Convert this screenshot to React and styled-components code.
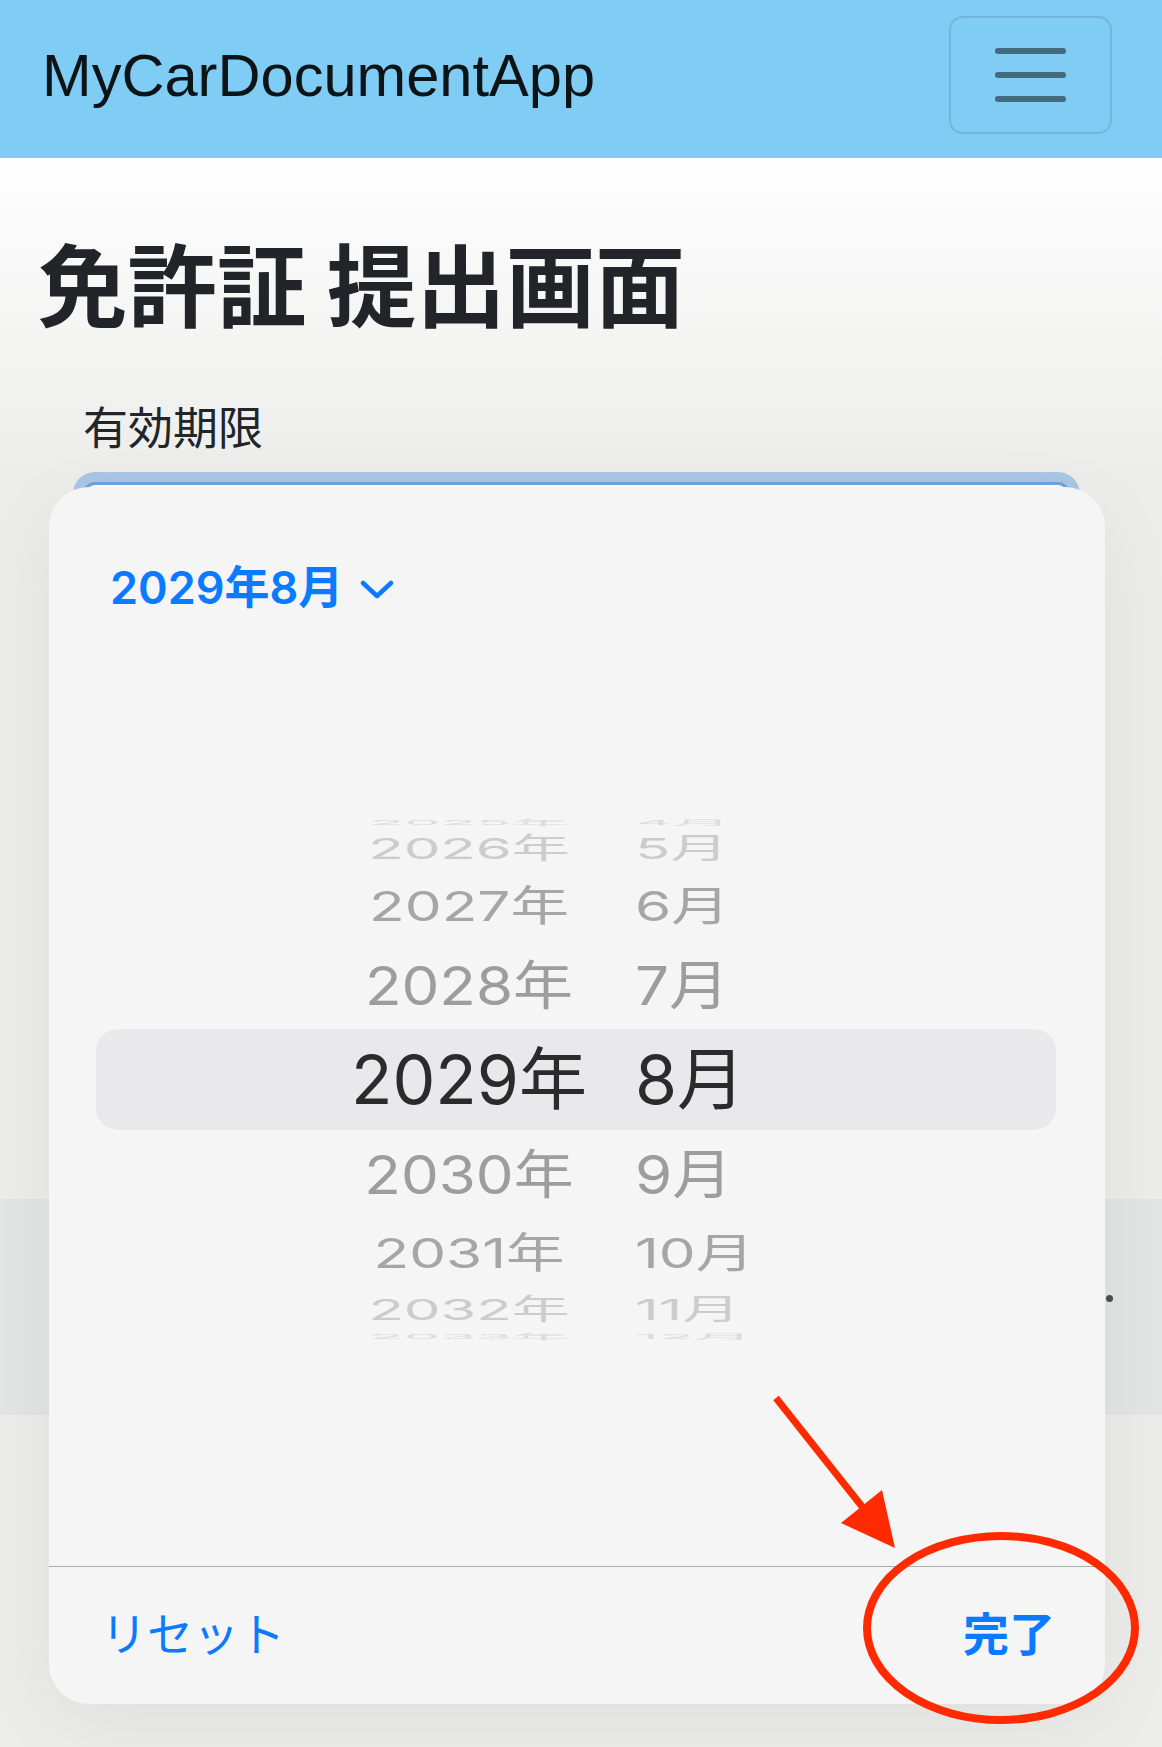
import React from "react"
import styled, { createGlobalStyle } from "styled-components"

const GlobalStyle = createGlobalStyle`
  html, body {
    margin: 0;
    padding: 0;
    background: #ececea;
  }
  body {
    font-family: "Noto Sans CJK JP", "Noto Sans", sans-serif;
    color: #212529;
  }
  * { box-sizing: border-box; }
`

const wheelRows = [
  { year: 2025, month: 4, k: 4, height: 10, squash: 0.11, size: 58, color: "#dcdcdc" },
  { year: 2026, month: 5, k: 3, height: 42.9, squash: 0.5, size: 58, color: "#cccccc" },
  { year: 2027, month: 6, k: 2, height: 71.2, squash: 0.71, size: 58.5, color: "#a6a6a6" },
  { year: 2028, month: 7, k: 1, height: 87.4, squash: 0.89, size: 60, color: "#9d9d9d" },
  { year: 2029, month: 8, k: 0, height: 101, squash: 1, size: 68, color: "#2b2b2b" },
  { year: 2030, month: 9, k: 1, height: 87.4, squash: 0.89, size: 60, color: "#9d9d9d" },
  { year: 2031, month: 10, k: 2, height: 71.2, squash: 0.71, size: 58.5, color: "#a6a6a6" },
  { year: 2032, month: 11, k: 3, height: 42.9, squash: 0.5, size: 58, color: "#cccccc" },
  { year: 2033, month: 12, k: 4, height: 10, squash: 0.11, size: 58, color: "#dcdcdc" },
]

const App = () => {
  return (
    <>
      <GlobalStyle />
      <Page>
        <Navbar>
          <Brand>MyCarDocumentApp</Brand>
          <Toggler aria-label="menu">
            <TogglerLine />
            <TogglerLine />
            <TogglerLine />
          </Toggler>
        </Navbar>

        <Main>
          <Title>免許証 提出画面</Title>
          <FormGroup>
            <FieldLabel>有効期限</FieldLabel>
            <DateInput />
          </FormGroup>
        </Main>

        <Band>
          <BandDot />
        </Band>

        <Picker>
          <PickerHeader>
            2029年8月
            <svg width="34" height="20" viewBox="0 0 34 20">
              <polyline
                points="3,3 17,16 31,3"
                fill="none"
                stroke="#0a7aff"
                strokeWidth="4.5"
                strokeLinecap="round"
                strokeLinejoin="round"
              />
            </svg>
          </PickerHeader>

          <Wheel>
            {wheelRows.map((r) => (
              <WheelRow key={r.year} $height={r.height} $selected={r.k === 0}>
                <YearCell $size={r.size} $color={r.color} $squash={r.squash}>
                  {r.year}年
                </YearCell>
                <MonthCell $size={r.size} $color={r.color} $squash={r.squash}>
                  {r.month}月
                </MonthCell>
              </WheelRow>
            ))}
          </Wheel>

          <PickerSpacer />

          <PickerFooter>
            <FooterButton>リセット</FooterButton>
            <FooterButton $bold>完了</FooterButton>
          </PickerFooter>
        </Picker>

        <Annotation width="1162" height="1747" viewBox="0 0 1162 1747">
          <ellipse
            cx="1001"
            cy="1628"
            rx="134"
            ry="92"
            fill="none"
            stroke="#ff2a00"
            strokeWidth="8"
          />
          <line
            x1="776"
            y1="1398"
            x2="864"
            y2="1509"
            stroke="#ff2a00"
            strokeWidth="7"
          />
          <polygon points="895,1548 841,1523 882,1490" fill="#ff2a00" />
        </Annotation>
      </Page>
    </>
  )
}

const Page = styled.div`
  position: relative;
  width: 1162px;
  min-height: 1747px;
  overflow: hidden;
  background:
    linear-gradient(180deg, #fefefe 158px, #ececeb 480px) top / 100% 480px no-repeat,
    #ececea;
`

const Navbar = styled.nav`
  height: 158px;
  background: #7fccf4;
  display: flex;
  align-items: center;
  justify-content: space-between;
  padding: 0 50px 8px 42px;
`

const Brand = styled.span`
  font-family: "Liberation Sans", Arial, sans-serif;
  font-size: 59.6px;
  color: rgba(0, 0, 0, 0.9);
`

const Toggler = styled.button`
  width: 163px;
  height: 118px;
  border: 2px solid rgba(0, 0, 0, 0.1);
  border-radius: 14px;
  background: transparent;
  display: flex;
  flex-direction: column;
  align-items: center;
  justify-content: center;
  gap: 18px;
  padding: 0;
`

const TogglerLine = styled.span`
  display: block;
  width: 71px;
  height: 6px;
  border-radius: 3px;
  background: #436b80;
`

const Main = styled.main`
  padding: 0 38px;
`

const Title = styled.h1`
  margin: 71px 0 0;
  font-size: 89.5px;
  font-weight: 700;
  line-height: 1.18;
  color: #212529;
`

const FormGroup = styled.div`
  margin-top: 57px;
  padding: 0 54px 0 45px;
`

const FieldLabel = styled.label`
  display: block;
  font-size: 45px;
  line-height: 1.5;
  margin-bottom: 23px;
  color: #212529;
`

const DateInput = styled.div`
  height: 115px;
  background: #fff;
  border: 3px solid #6ea4de;
  border-radius: 12px;
  box-shadow: 0 0 0 10px #a9c6e4;
`

const Band = styled.div`
  margin-top: 602px;
  height: 216px;
  background: #e3e5e4;
  display: flex;
  justify-content: flex-end;
  align-items: flex-start;
  padding: 96px 49px 0 0;
`

const BandDot = styled.span`
  width: 7px;
  height: 7px;
  border-radius: 50%;
  background: #4a5057;
`

const Picker = styled.div`
  position: absolute;
  top: 487px;
  left: 49px;
  width: 1056px;
  height: 1217px;
  background: #f5f5f5;
  border-radius: 40px;
  box-shadow: 0 20px 80px rgba(0, 0, 0, 0.06);
  display: flex;
  flex-direction: column;
  overflow: hidden;
`

const PickerHeader = styled.div`
  display: flex;
  align-items: center;
  gap: 17px;
  padding: 74px 0 0 61px;
  height: 128px;
  font-family: Inter, "Noto Sans CJK JP", sans-serif;
  font-size: 45px;
  font-weight: 600;
  line-height: 54px;
  color: #0a7aff;

  svg {
    margin-top: 4px;
  }
`

const Wheel = styled.div`
  margin-top: 202.5px;
  height: 524px;
  display: flex;
  flex-direction: column;
`

const WheelRow = styled.div`
  flex: none;
  height: ${(p) => p.$height}px;
  margin: 0 49px 0 47px;
  padding-left: 243px;
  display: flex;
  align-items: center;
  border-radius: 22px;
  background: ${(p) => (p.$selected ? "#e9e9eb" : "transparent")};
`

const WheelText = styled.span`
  display: block;
  font-family: Inter, "Noto Sans CJK JP", sans-serif;
  font-size: ${(p) => p.$size}px;
  line-height: 1.2;
  color: ${(p) => p.$color};
  white-space: nowrap;
  transform: scaleY(${(p) => p.$squash});
`

const YearCell = styled(WheelText)`
  width: 260px;
  text-align: center;
`

const MonthCell = styled(WheelText)`
  margin-left: 36px;
  text-align: left;
`

const PickerSpacer = styled.div`
  flex: 1;
`

const PickerFooter = styled.div`
  flex: none;
  height: 138px;
  border-top: 1px solid #acacac;
  display: flex;
  align-items: center;
  justify-content: space-between;
  padding: 0 50px 8px 52px;
`

const FooterButton = styled.button`
  border: 0;
  background: transparent;
  padding: 0;
  font-family: "Noto Sans CJK JP", sans-serif;
  font-size: 46px;
  font-weight: ${(p) => (p.$bold ? 700 : 400)};
  color: #0a7aff;
  line-height: 1.2;
`

const Annotation = styled.svg`
  position: absolute;
  top: 0;
  left: 0;
  pointer-events: none;
`

export default App
